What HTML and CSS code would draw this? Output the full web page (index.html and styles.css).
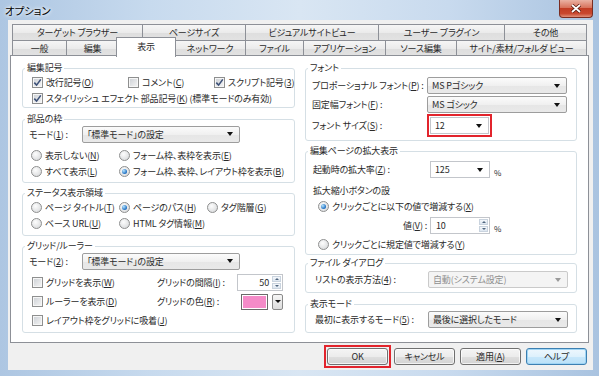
FILE: index.html
```html
<!DOCTYPE html>
<html lang="ja">
<head>
    <meta charset="UTF-8">
    <title>オプション</title>
    <link rel="stylesheet" href="styles.css">
</head>
<body>
<div class="window">
    <div class="titlebar">
        <span class="title">オプション</span>
        <div class="close">
            <svg width="12" height="9" viewBox="0 0 12 9"><path d="M2 1 L10 8 M10 1 L2 8" stroke="#5a1c10" stroke-width="3.4"/><path d="M2 1 L10 8 M10 1 L2 8" stroke="#fff" stroke-width="1.7"/></svg>
        </div>
    </div>

    <div class="client">
        <!-- タブ -->
        <div class="tabs">
            <div class="tabrow row1">
                <div class="tab">ターゲット ブラウザー</div>
                <div class="tab">ページサイズ</div>
                <div class="tab">ビジュアルサイトビュー</div>
                <div class="tab">ユーザー プラグイン</div>
                <div class="tab">その他</div>
            </div>
            <div class="tabrow row2">
                <div class="tab">一般</div>
                <div class="tab">編集</div>
                <div class="tab sel">表示</div>
                <div class="tab">ネットワーク</div>
                <div class="tab">ファイル</div>
                <div class="tab">アプリケーション</div>
                <div class="tab">ソース編集</div>
                <div class="tab">サイト/素材/フォルダ ビュー</div>
            </div>
        </div>

        <div class="panel">
            <!-- 左列 -->
            <div class="col">
                <fieldset class="grp g-mark">
                    <legend>編集記号</legend>
                    <div class="row">
                        <label class="chk c1"><span class="cb on"><svg width="9" height="9" viewBox="0 0 9 9"><path d="M1.3 4.6 L3.6 7.1 L7.8 1.4" fill="none" stroke="#3d5178" stroke-width="1.6"/></svg></span>改行記号(<u>O</u>)</label>
                        <label class="chk c2"><span class="cb"></span>コメント(<u>C</u>)</label>
                        <label class="chk"><span class="cb on"><svg width="9" height="9" viewBox="0 0 9 9"><path d="M1.3 4.6 L3.6 7.1 L7.8 1.4" fill="none" stroke="#3d5178" stroke-width="1.6"/></svg></span>スクリプト記号(<u>3</u>)</label>
                    </div>
                    <div class="row">
                        <label class="chk"><span class="cb on"><svg width="9" height="9" viewBox="0 0 9 9"><path d="M1.3 4.6 L3.6 7.1 L7.8 1.4" fill="none" stroke="#3d5178" stroke-width="1.6"/></svg></span>スタイリッシュ エフェクト 部品記号(<u>K</u>) (標準モードのみ有効)</label>
                    </div>
                </fieldset>

                <fieldset class="grp g-frame">
                    <legend>部品の枠</legend>
                    <div class="row moderow">
                        <span class="modelbl">モード(<u>1</u>) :</span>
                        <div class="combo mode"><span>「標準モード」の設定</span><i class="arr"></i></div>
                    </div>
                    <div class="radios">
                        <div class="row rrow">
                            <label class="opt o1"><span class="rb"></span>表示しない(<u>N</u>)</label>
                            <label class="opt"><span class="rb"></span>フォーム枠、表枠を表示(<u>E</u>)</label>
                        </div>
                        <div class="row rrow">
                            <label class="opt o1"><span class="rb"></span>すべて表示(<u>L</u>)</label>
                            <label class="opt"><span class="rb on"></span>フォーム枠、表枠、レイアウト枠を表示(<u>B</u>)</label>
                        </div>
                    </div>
                </fieldset>

                <fieldset class="grp g-status">
                    <legend>ステータス表示領域</legend>
                    <div class="row rrow">
                        <label class="opt o1"><span class="rb"></span>ページ タイトル(<u>T</u>)</label>
                        <label class="opt o1"><span class="rb on"></span>ページのパス(<u>H</u>)</label>
                        <label class="opt"><span class="rb"></span>タグ階層(<u>G</u>)</label>
                    </div>
                    <div class="row rrow">
                        <label class="opt o1"><span class="rb"></span>ベース URL(<u>U</u>)</label>
                        <label class="opt"><span class="rb"></span>HTML タグ情報(<u>M</u>)</label>
                    </div>
                </fieldset>

                <fieldset class="grp g-grid">
                    <legend>グリッド/ルーラー</legend>
                    <div class="row moderow">
                        <span class="modelbl">モード(<u>2</u>) :</span>
                        <div class="combo mode"><span>「標準モード」の設定</span><i class="arr"></i></div>
                    </div>
                    <div class="gridrows">
                        <div class="row grow">
                            <label class="chk gc"><span class="cb"></span>グリッドを表示(<u>W</u>)</label>
                            <span class="glbl">グリッドの間隔(<u>I</u>) :</span>
                            <div class="spin grid-spin"><span class="val">50</span><span class="sp"><i class="up"></i><i class="dn"></i></span></div>
                        </div>
                        <div class="row grow">
                            <label class="chk gc"><span class="cb"></span>ルーラーを表示(<u>D</u>)</label>
                            <span class="glbl clr">グリッドの色(<u>R</u>) :</span>
                            <span class="swatch"></span>
                            <span class="dropbtn"><i class="arr"></i></span>
                        </div>
                        <div class="row grow">
                            <label class="chk"><span class="cb"></span>レイアウト枠をグリッドに吸着(<u>J</u>)</label>
                        </div>
                    </div>
                </fieldset>
            </div>

            <!-- 右列 -->
            <div class="col">
                <fieldset class="grp g-font">
                    <legend>フォント</legend>
                    <div class="row frow first">
                        <span class="flbl">プロポーショナル フォント(<u>P</u>) :</span>
                        <div class="combo wide"><span>MS Pゴシック</span><i class="arr"></i></div>
                    </div>
                    <div class="row frow">
                        <span class="flbl">固定幅フォント(<u>F</u>) :</span>
                        <div class="combo wide"><span>MS ゴシック</span><i class="arr"></i></div>
                    </div>
                    <div class="row frow sizerow">
                        <span class="flbl">フォント サイズ(<u>S</u>) :</span>
                        <span class="mark size-mark"><span class="combo edit size"><span>12</span><i class="arr"></i></span></span>
                    </div>
                </fieldset>

                <fieldset class="grp g-zoom">
                    <legend>編集ページの拡大表示</legend>
                    <div class="row zrow z1">
                        <span class="zlbl">起動時の拡大率(<u>Z</u>) :</span>
                        <div class="combo edit zcombo"><span>125</span><i class="arr"></i></div>
                        <span class="pct">%</span>
                    </div>
                    <div class="row zrow z2">拡大縮小ボタンの設</div>
                    <div class="row zopt">
                        <label class="opt"><span class="rb on"></span>クリックごとに以下の値で増減する(<u>X</u>)</label>
                    </div>
                    <div class="row zrow z4">
                        <span class="zlbl right">値(<u>V</u>) :</span>
                        <div class="spin zspin"><span class="val">10</span><span class="sp"><i class="up"></i><i class="dn"></i></span></div>
                        <span class="pct">%</span>
                    </div>
                    <div class="row zopt">
                        <label class="opt"><span class="rb"></span>クリックごとに規定値で増減する(<u>Y</u>)</label>
                    </div>
                </fieldset>

                <fieldset class="grp g-file">
                    <legend>ファイル ダイアログ</legend>
                    <div class="row vrow">
                        <span class="vlbl">リストの表示方法(<u>4</u>) :</span>
                        <div class="combo wide off"><span>自動(システム設定)</span><i class="arr"></i></div>
                    </div>
                </fieldset>

                <fieldset class="grp g-view">
                    <legend>表示モード</legend>
                    <div class="row vrow">
                        <span class="vlbl">最初に表示するモード(<u>5</u>) :</span>
                        <div class="combo wide"><span>最後に選択したモード</span><i class="arr"></i></div>
                    </div>
                </fieldset>
            </div>
        </div>

        <div class="buttons">
            <span class="mark ok-mark"><span class="btn">OK</span></span>
            <span class="btn">キャンセル</span>
            <span class="btn">適用(<u>A</u>)</span>
            <span class="btn help">ヘルプ</span>
        </div>
    </div>
</div>
</body>
</html>
```

FILE: styles.css
```css
* {
    margin: 0;
    padding: 0;
    box-sizing: border-box;
}

body {
    width: 599px;
    height: 376px;
    overflow: hidden;
    font-family: "Noto Sans CJK JP", "Noto Sans", sans-serif;
    font-size: 9px;
    letter-spacing: -0.15px;
    font-feature-settings: "palt";
    color: #2a2a2a;
}

u {
    text-decoration: underline;
    text-underline-offset: 1px;
}

.window {
    width: 599px;
    height: 376px;
    display: flex;
    flex-direction: column;
    background: linear-gradient(90deg, #adc6e2 0%, #c7daee 25%, #d9e6f3 50%, #c8daee 75%, #a9c3e0 100%);
}

/* タイトルバー */
.titlebar {
    height: 20px;
    display: flex;
    align-items: flex-start;
}

.title {
    margin: 4px 0 0 5px;
    font-size: 10.5px;
    line-height: 13px;
    color: #000;
    text-shadow: 0 0 5px #fff, 0 0 3px #fff;
}

.close {
    margin-left: auto;
    margin-right: 6px;
    width: 34px;
    height: 18px;
    border: 1px solid #7a2d22;
    border-top: 0;
    border-radius: 0 0 4px 4px;
    background: linear-gradient(#eab2a3, #d8735c 45%, #c23d24 50%, #c9482f 80%, #e0907a);
    display: flex;
    align-items: center;
    justify-content: center;
}

.client {
    flex: 1;
    margin: 0 6px 6px 8px;
    padding: 4px 4px 0 2px;
    background: #f0f0f0;
    display: flex;
    flex-direction: column;
}

/* タブ */
.tabs {
    margin: 0 2px -1px;
}

.tabrow {
    display: flex;
    height: 16px;
}

.tab {
    height: 16px;
    border: 1px solid #8d9097;
    border-bottom: 0;
    border-right: 0;
    background: linear-gradient(#f6f6f6, #ebebeb 50%, #dedede 51%, #e2e2e2);
    text-align: center;
    line-height: 15px;
    white-space: nowrap;
    flex-shrink: 0;
}

.tab:last-child {
    border-right: 1px solid #8d9097;
}

.row1 .tab:nth-child(1) { width: 130px; }
.row1 .tab:nth-child(2) { width: 103px; }
.row1 .tab:nth-child(3) { width: 133px; }
.row1 .tab:nth-child(4) { width: 126px; }
.row1 .tab:nth-child(5) { width: 83px; }

.row2 .tab:nth-child(1) { width: 54px; }
.row2 .tab:nth-child(2) { width: 52px; }
.row2 .tab:nth-child(3) { width: 56px; }
.row2 .tab:nth-child(4) { width: 71px; }
.row2 .tab:nth-child(5) { width: 58px; }
.row2 .tab:nth-child(6) { width: 82px; }
.row2 .tab:nth-child(7) { width: 71px; }
.row2 .tab:nth-child(8) { width: 131px; }

.row2 .tab.sel {
    width: 60px;
    height: 20px;
    margin: -3px -2px 0;
    position: relative;
    z-index: 1;
    background: #fff;
    border-right: 1px solid #8d9097;
    line-height: 17px;
}

/* パネル */
.panel {
    height: 288px;
    background: #fff;
    border: 1px solid #8d9097;
    display: grid;
    grid-template-columns: 273px 272px;
    column-gap: 10px;
    padding: 6px 11px 0 11px;
}

.col {
    display: flex;
    flex-direction: column;
}

.grp {
    border: 1px solid #d5dfe5;
    border-radius: 3px;
    padding: 0;
    margin: 0;
    min-width: 0;
}

.grp legend {
    line-height: 12px;
    padding: 0 2px;
    margin-left: 2px;
}

.row {
    display: flex;
    align-items: center;
    white-space: nowrap;
}

.chk,
.opt {
    display: flex;
    align-items: center;
    flex-shrink: 0;
}

.cb {
    width: 11px;
    height: 11px;
    margin-right: 3px;
    border: 1px solid #8e8f8f;
    background: linear-gradient(135deg, #cbcfd4, #f6f6f6);
    box-shadow: inset 0 0 0 1px #f6f6f6;
    display: flex;
    align-items: center;
    justify-content: center;
    flex-shrink: 0;
}

.rb {
    width: 11px;
    height: 11px;
    margin-right: 3px;
    border: 1px solid #8e8f8f;
    border-radius: 50%;
    background: radial-gradient(circle at 40% 35%, #fdfdfd, #d2d4d6);
    position: relative;
    flex-shrink: 0;
}

.rb.on::after {
    content: "";
    position: absolute;
    left: 2px;
    top: 2px;
    width: 5px;
    height: 5px;
    border-radius: 50%;
    background: radial-gradient(circle at 35% 35%, #b6e5ff, #1c6dc1 70%, #0d4b92);
}

/* 赤枠 */
.mark {
    display: flex;
    border: 2px solid #e2242c;
    padding: 1px;
    margin: -3px 0;
}

.size-mark {
    padding: 1px 1px 1px 1px;
}

/* コンボボックス */
.combo {
    height: 17px;
    display: flex;
    align-items: center;
    justify-content: space-between;
    padding: 0 6px 0 4px;
    border: 1px solid #9d9d9d;
    border-radius: 2px;
    background: linear-gradient(#fbfbfb, #f0f0f0 50%, #e6e6e6 51%, #e9e9e9);
    flex-shrink: 0;
}

.combo.edit {
    background: #fff;
    border-color: #c3c6cb;
    border-radius: 0;
}

.combo.off {
    background: #f4f4f4;
    border-color: #cacaca;
    color: #8f8f8f;
}

.arr {
    width: 0;
    height: 0;
    border-left: 3.5px solid transparent;
    border-right: 3.5px solid transparent;
    border-top: 4px solid #111;
}

.combo.off .arr {
    border-top-color: #9a9a9a;
}

.combo.mode { width: 158px; }
.combo.wide { width: 140px; }

.combo.size {
    width: 59px;
}

/* スピン */
.spin {
    height: 17px;
    display: flex;
    border: 1px solid #c3c6cb;
    background: #fff;
    flex-shrink: 0;
}

.spin .val {
    flex: 1;
    line-height: 15px;
}

.spin .sp {
    width: 10px;
    display: flex;
    flex-direction: column;
    gap: 1px;
    padding: 1px 1px 1px 0;
}

.sp i {
    flex: 1;
    background: linear-gradient(#f4f7fb, #dde6f0);
    border: 1px solid #c9d3de;
    display: flex;
    align-items: center;
    justify-content: center;
}

.sp i::after {
    content: "";
    border-left: 2px solid transparent;
    border-right: 2px solid transparent;
}

.sp .up::after { border-bottom: 2px solid #50667f; }
.sp .dn::after { border-top: 2px solid #50667f; }

.pct {
    font-size: 8px;
    align-self: flex-end;
    margin: 0 0 2px 4px;
}

/* 編集記号 */
.g-mark {
    padding-bottom: 1px;
}

.g-mark .row {
    height: 16px;
    padding-left: 9px;
}

.g-mark .c1 { width: 96px; }
.g-mark .c2 { width: 86px; }

/* 部品の枠 */
.g-frame {
    margin-top: 5px;
    padding-bottom: 3px;
}

.moderow {
    height: 18px;
    padding-left: 6px;
}

.modelbl {
    width: 53px;
}

.radios {
    margin-top: 4px;
}

.rrow {
    height: 16px;
    padding-left: 8px;
}

.rrow .o1 { width: 88px; }

/* ステータス */
.g-status {
    margin-top: 4px;
    padding-bottom: 4px;
}

/* グリッド */
.g-grid {
    margin-top: 4px;
    padding-bottom: 2px;
}

.gridrows {
    margin-top: 3px;
}

.grow {
    height: 19px;
    padding-left: 9px;
}

.gc { width: 125px; }

.glbl { width: 80px; }
.glbl.clr { width: 84px; }

.grid-spin { width: 46px; }

.grid-spin .val {
    text-align: right;
    padding-right: 3px;
}

.swatch {
    width: 27px;
    height: 16px;
    border: 1px solid #6a6a6a;
    background: #f48bc8;
    box-shadow: inset 0 0 0 1px #fff;
}

.dropbtn {
    width: 11px;
    height: 16px;
    margin-left: 4px;
    border: 1px solid #8a8a8a;
    border-radius: 2px;
    background: linear-gradient(#f6f6f6, #dcdcdc);
    display: flex;
    align-items: center;
    justify-content: center;
}

.dropbtn .arr {
    border-left-width: 3px;
    border-right-width: 3px;
    border-top-width: 3px;
}

/* フォント */
.g-font {
    padding-bottom: 3px;
}

.frow {
    height: 19px;
    padding-left: 6px;
}

.frow.first {
    margin-top: 2px;
}

.frow.sizerow {
    height: 23px;
}

.flbl {
    width: 115px;
}

.size-mark {
    margin-left: 0;
}

/* 拡大表示 */
.g-zoom {
    margin-top: 4px;
    padding-bottom: 2px;
}

.zrow {
    padding-left: 7px;
}

.z1 {
    height: 21px;
    margin-top: 2px;
}

.z2 {
    height: 16px;
    margin-top: 2px;
}

.z4 {
    height: 21px;
    margin-top: 1px;
}

.zopt {
    height: 16px;
    padding-left: 12px;
}

.zlbl {
    width: 117px;
}

.zlbl.right {
    text-align: right;
    padding-right: 3px;
}

.zcombo { width: 60px; }

.zspin { width: 60px; }

.zspin .val {
    padding-left: 5px;
}

/* ファイル ダイアログ・表示モード */
.g-file {
    margin-top: 2px;
    padding-bottom: 2px;
}

.g-view {
    margin-top: 5px;
    padding-bottom: 3px;
}

.vrow {
    height: 21px;
    padding-left: 9px;
}

.g-view .vrow {
    height: 19px;
}

.vlbl {
    width: 113px;
}

/* ボタン */
.buttons {
    display: flex;
    justify-content: flex-end;
    align-items: center;
    gap: 5px;
    height: 17px;
    margin-top: 5px;
    padding-right: 2px;
}

.btn {
    width: 61px;
    height: 17px;
    border: 1px solid #707070;
    border-radius: 3px;
    background: linear-gradient(#f4f4f4, #ececec 50%, #dfdfdf 51%, #d3d3d3);
    box-shadow: inset 0 0 0 1px rgba(255, 255, 255, 0.7);
    text-align: center;
    line-height: 15px;
}

.ok-mark {
    margin-right: -2px;
}

.btn.help {
    border-color: #3c7fb1;
    background: linear-gradient(#eef7fd, #def1fc 50%, #c9e8fb 51%, #b9e0f7);
    box-shadow: inset 0 0 0 1px #9fd5f5;
}
```
